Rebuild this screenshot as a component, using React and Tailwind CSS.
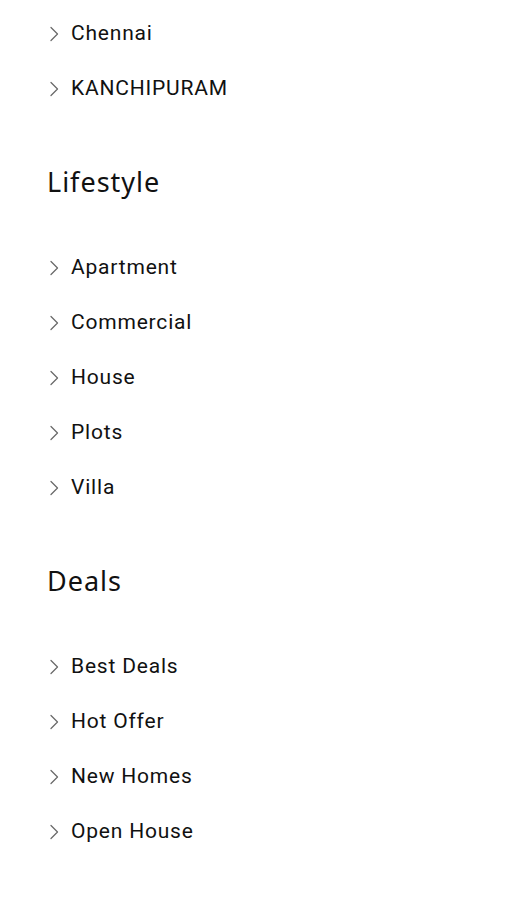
import React from "react";

const sections = [
  { title: null, items: ["Chennai", "KANCHIPURAM"] },
  { title: "Lifestyle", items: ["Apartment", "Commercial", "House", "Plots", "Villa"] },
  { title: "Deals", items: ["Best Deals", "Hot Offer", "New Homes", "Open House"] },
];

function Chevron() {
  return (
    <svg width="10" height="16" viewBox="0 0 10 16" fill="none" className="shrink-0">
      <path d="M2 1.5 L8.5 8 L2 14.5" stroke="#6b6b6b" strokeWidth="1.3" strokeLinecap="round" strokeLinejoin="round" />
    </svg>
  );
}

export default function App() {
  return (
    <div className="min-h-[900px] w-full bg-white pl-[49px] pt-[6px] font-['Roboto',sans-serif]">
      {sections.map((s, i) => (
        <div key={i}>
          {s.title && (
            <h3 className="mt-[46px] mb-[38px] -ml-[2px] flex h-[40px] items-center font-['Noto_Sans',sans-serif] text-[27px] font-normal tracking-[1px] text-[#111]">
              {s.title}
            </h3>
          )}
          <ul>
            {s.items.map((item) => (
              <li key={item} className="flex h-[55px] items-center gap-[12px] text-[21px] font-normal tracking-[0.8px] text-[#111]">
                <Chevron />
                <span>{item}</span>
              </li>
            ))}
          </ul>
        </div>
      ))}
    </div>
  );
}
